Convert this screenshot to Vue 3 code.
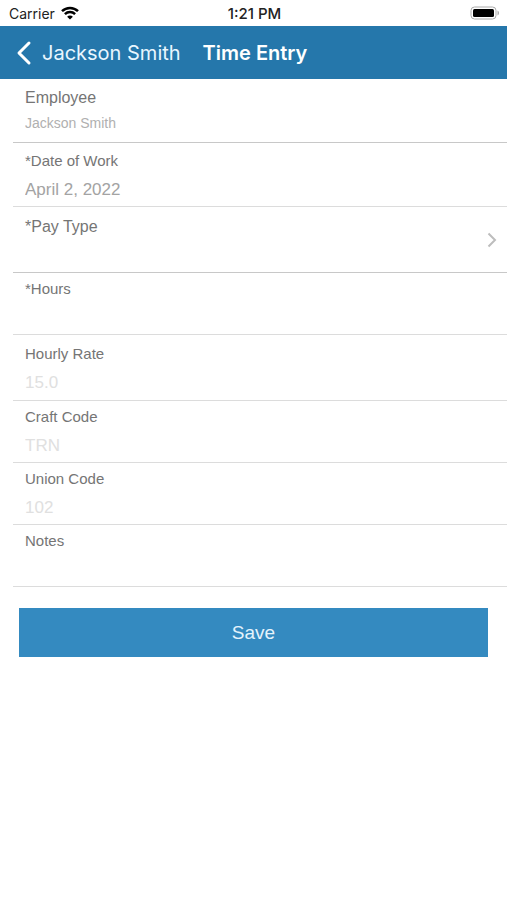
<script setup>
import { reactive } from 'vue'

const fields = reactive([
  { id: 'employee', label: 'Employee', value: 'Jackson Smith', kind: 'employee', readonly: true },
  { id: 'date', label: '*Date of Work', value: 'April 2, 2022', kind: 'date' },
  { id: 'pay', label: '*Pay Type', value: '', kind: 'pick' },
  { id: 'hours', label: '*Hours', value: '', kind: 'entry' },
  { id: 'rate', label: 'Hourly Rate', value: '', placeholder: '15.0', kind: 'rate' },
  { id: 'craft', label: 'Craft Code', value: '', placeholder: 'TRN', kind: 'entry' },
  { id: 'union', label: 'Union Code', value: '', placeholder: '102', kind: 'entry' },
  { id: 'notes', label: 'Notes', value: '', kind: 'entry' },
])
</script>

<template>
  <div class="screen">
    <div class="status">
      <div class="carrier">
        <span>Carrier</span>
        <svg class="wifi" viewBox="0 0 18 14" aria-hidden="true">
          <path d="M1 5.2C5.5.8 12.5.8 17 5.2" />
          <path d="M3.9 8.1c2.9-2.8 7.3-2.8 10.2 0" />
          <path class="dot" d="M9 13.6 6.1 10.7c1.6-1.5 4.2-1.5 5.8 0z" />
        </svg>
      </div>
      <div class="clock">1:21 PM</div>
      <svg class="battery" viewBox="0 0 30 14" aria-hidden="true">
        <rect class="shell" x="1" y="1" width="25" height="12" rx="3.5" />
        <rect x="3" y="3" width="21" height="8" rx="1.5" />
        <path class="cap" d="M27.5 4.5c2 .8 2 4.2 0 5z" />
      </svg>
    </div>

    <header class="nav">
      <a class="back" href="#">
        <svg viewBox="0 0 16 26" aria-hidden="true"><path d="M13 3 3 13l10 10" /></svg>
        <span>Jackson Smith</span>
      </a>
      <h1>Time Entry</h1>
    </header>

    <form @submit.prevent>
      <div v-for="f in fields" :key="f.id" class="row" :class="f.kind">
        <div class="field">
          <label :for="f.id">{{ f.label }}</label>
          <input :id="f.id" v-model="f.value" type="text" :placeholder="f.placeholder" :readonly="f.readonly" />
        </div>
        <svg v-if="f.kind === 'pick'" class="chevron" viewBox="0 0 10 16" aria-hidden="true">
          <path d="m1.5 1.5 6.5 6.5-6.5 6.5" />
        </svg>
      </div>
      <button class="save" type="submit">Save</button>
    </form>
  </div>
</template>

<style>
body {
  margin: 0;
  background: #fff;
}
</style>

<style scoped>
.screen {
  font-family: "Liberation Sans", Arial, sans-serif;
  color: #757575;
}
.status {
  display: grid;
  grid-template-columns: 1fr auto 1fr;
  align-items: center;
  height: 26px;
  padding: 0 7px 0 9px;
  box-sizing: border-box;
  font-family: Inter, sans-serif;
  font-size: 14px;
  color: #222;
}
.carrier {
  display: flex;
  align-items: center;
  gap: 6px;
}
.clock {
  font-size: 15px;
  font-weight: 500;
}
.wifi {
  width: 18px;
  height: 14px;
  fill: none;
  stroke: #000;
  stroke-width: 2.5;
}
.wifi .dot {
  fill: #000;
  stroke: none;
}
.battery {
  justify-self: end;
  width: 30px;
  height: 14px;
}
.battery .shell {
  fill: #fff;
  stroke: #aaa;
}
.battery .cap {
  fill: #aaa;
}
.nav {
  display: flex;
  align-items: center;
  gap: 22px;
  height: 53px;
  padding: 0 16px;
  background: #2577ab;
  font-family: Inter, sans-serif;
  font-size: 20px;
  color: #fff;
}
.back {
  display: flex;
  align-items: center;
  gap: 10px;
  color: #e9f6ff;
  text-decoration: none;
  white-space: nowrap;
}
.back svg {
  width: 16px;
  height: 26px;
  fill: none;
  stroke: #fff;
  stroke-width: 3;
  stroke-linecap: round;
  stroke-linejoin: round;
}
.nav h1 {
  margin: 0;
  font-size: 20px;
  font-weight: 600;
  white-space: nowrap;
}
.row {
  display: flex;
  align-items: center;
  box-sizing: border-box;
  height: 62px;
  margin-left: 13px;
  padding: 0 10px 0 12px;
  border-bottom: 1px solid #dcdcdc;
}
.row.employee,
.row.date {
  height: 64px;
}
.row.date,
.row.rate {
  padding-top: 2px;
}
.row.pick,
.row.rate {
  height: 66px;
}
.row.pick .field {
  padding-top: 4px;
}
.row.employee,
.row.pick {
  border-color: #c8c8c8;
}
.field {
  display: flex;
  flex: 1;
  flex-direction: column;
  gap: 8px;
  min-width: 0;
}
.employee .field {
  gap: 4px;
}
label {
  font-size: 15px;
  line-height: 20px;
}
.employee label,
.pick label {
  font-size: 16px;
}
input {
  width: 100%;
  height: 22px;
  margin: 0;
  padding: 0;
  border: 0;
  outline: 0;
  background: transparent;
  font: 17px "Liberation Sans", Arial, sans-serif;
  color: #a3a3a3;
}
.employee input {
  font-size: 14px;
  color: #b0b0b0;
}
input::placeholder {
  color: #e0e0e0;
  opacity: 1;
}
.chevron {
  width: 10px;
  height: 16px;
  fill: none;
  stroke: #bdbdbd;
  stroke-width: 2;
}
.save {
  display: block;
  width: calc(100% - 38px);
  height: 49px;
  margin: 21px 19px 0;
  padding: 0;
  border: 0;
  background: #348ac0;
  font: 19px "Liberation Sans", Arial, sans-serif;
  color: #e4f3fc;
}
</style>
